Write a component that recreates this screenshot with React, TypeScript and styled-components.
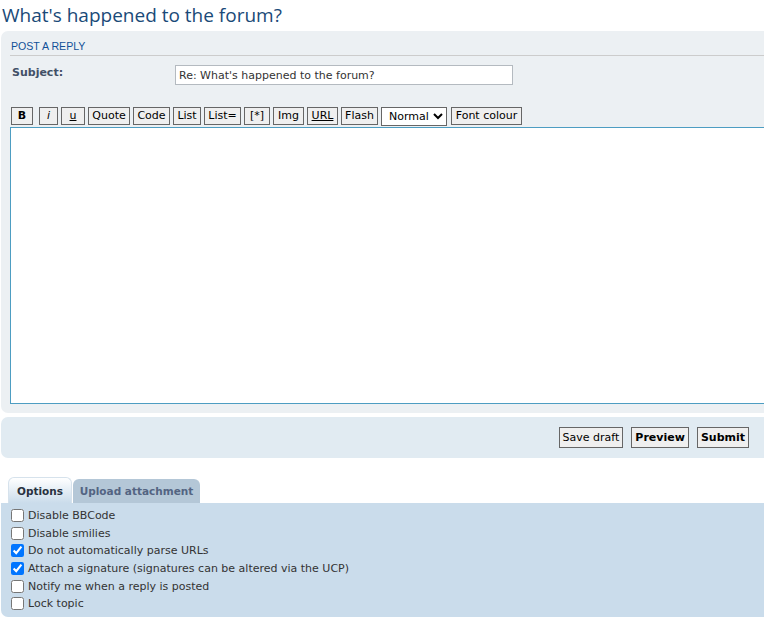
import React from "react";
import styled, { createGlobalStyle } from "styled-components";

const Global = createGlobalStyle`
  html, body { margin: 0; padding: 0; background: #fff; overflow: hidden; }
  body { font-family: "DejaVu Sans", Verdana, sans-serif; color: #333; }
`;

const Page = styled.div`
  width: 790px;
  padding-left: 1px;
`;

const Title = styled.h2`
  margin: 0;
  padding: 4px 0 4px 1px;
  font-family: "Open Sans", "DejaVu Sans", sans-serif;
  font-weight: 400;
  font-size: 19px;
  line-height: 23px;
  color: #1a4a78;
`;

const Panel = styled.div<{ $bg: string }>`
  background: ${(p) => p.$bg};
  border-radius: 7px;
`;

const ReplyPanel = styled(Panel)`
  padding: 8px 0 9px 9px;
`;

const Header = styled.h3`
  margin: 0;
  padding: 0 0 2px 1px;
  border-bottom: 1px solid #cccccc;
  font-family: "Liberation Sans", Arial, sans-serif;
  font-weight: 400;
  font-size: 10.6px;
  line-height: 14px;
  text-transform: uppercase;
  color: #115098;
`;

const SubjectRow = styled.div`
  display: flex;
  align-items: flex-start;
  margin-top: 9px;
`;

const Label = styled.label`
  width: 165px;
  padding: 1px 0 0 2px;
  box-sizing: border-box;
  font-weight: 700;
  font-size: 11px;
  line-height: 14px;
  color: #425067;
`;

const SubjectInput = styled.input`
  width: 338px;
  height: 20px;
  box-sizing: border-box;
  border: 1px solid #b4bac0;
  padding: 0 3px;
  font-family: "DejaVu Sans", Verdana, sans-serif;
  font-size: 11px;
  color: #333;
  background: #fff;
  outline: none;
`;

const Toolbar = styled.div`
  display: flex;
  align-items: flex-start;
  margin-top: 22px;
  padding-left: 1px;
  height: 18px;
`;

const ToolButton = styled.button<{ $w: number; $gap?: number; $b?: boolean; $i?: boolean; $u?: boolean }>`
  flex: none;
  width: ${(p) => p.$w}px;
  height: 18px;
  margin-right: ${(p) => (p.$gap ?? 3)}px;
  padding: 0;
  box-sizing: border-box;
  border: 1px solid #666;
  background: #efefef;
  font-family: "DejaVu Sans", Verdana, sans-serif;
  font-size: 11px;
  line-height: 16px;
  color: #000;
  font-weight: ${(p) => (p.$b ? 700 : 400)};
  font-style: ${(p) => (p.$i ? "italic" : "normal")};
  text-decoration: ${(p) => (p.$u ? "underline" : "none")};
`;

const SizeSelect = styled.select`
  flex: none;
  width: 66px;
  height: 19px;
  margin-right: 4px;
  padding: 0 0 0 3px;
  border: 1px solid #666;
  border-radius: 0;
  background: #fff;
  font-family: "DejaVu Sans", Verdana, sans-serif;
  font-size: 11px;
  color: #000;
`;

const Editor = styled.textarea`
  display: block;
  margin-top: 2px;
  width: 100%;
  height: 277px;
  box-sizing: border-box;
  border: 1px solid #4d9dc2;
  background: #fff;
  resize: none;
  outline: none;
`;

const ActionPanel = styled(Panel)`
  margin-top: 4px;
  height: 41px;
  display: flex;
  align-items: center;
  justify-content: flex-end;
  padding-right: 42px;
  gap: 8px;
`;

const ActionButton = styled.button<{ $b?: boolean }>`
  height: 21px;
  padding: 0 3px;
  box-sizing: border-box;
  border: 1px solid #666;
  background: #efefef;
  font-family: "DejaVu Sans", Verdana, sans-serif;
  font-size: 11px;
  font-weight: ${(p) => (p.$b ? 700 : 400)};
  color: #000;
`;

const Tabs = styled.div`
  display: flex;
  align-items: flex-end;
  margin-top: 19px;
  padding-left: 7px;
  height: 26px;
`;

const Tab = styled.div<{ $active?: boolean; $w: number }>`
  width: ${(p) => p.$w}px;
  height: ${(p) => (p.$active ? 26 : 24)}px;
  margin-right: 1px;
  box-sizing: border-box;
  border-radius: 6px 6px 0 0;
  display: flex;
  align-items: center;
  justify-content: center;
  font-weight: 700;
  font-size: 10.5px;
  color: ${(p) => (p.$active ? "#28313f" : "#536482")};
  background: ${(p) =>
    p.$active ? "linear-gradient(#ffffff, #cadceb)" : "#b4c7d7"};
  border: ${(p) => (p.$active ? "1px solid #d6e2ec" : "none")};
  border-bottom: none;
`;

const OptionsPanel = styled.div`
  background: #cadceb;
  border-radius: 0 7px 7px 7px;
  padding: 4px 0 5px 10px;
  height: 114px;
  box-sizing: border-box;
`;

const OptionRow = styled.label`
  display: flex;
  align-items: center;
  height: 17.6px;
  font-size: 11px;
  color: #333;
`;

const Check = styled.input`
  margin: 0 4px 0 0;
  width: 13px;
  height: 13px;
`;

const tools: { t: string; w: number; gap?: number; b?: boolean; i?: boolean; u?: boolean }[] = [
  { t: "B", w: 22, gap: 6, b: true },
  { t: "i", w: 19, i: true },
  { t: "u", w: 24, u: true },
  { t: "Quote", w: 42 },
  { t: "Code", w: 37 },
  { t: "List", w: 28 },
  { t: "List=", w: 37 },
  { t: "[*]", w: 26 },
  { t: "Img", w: 31 },
  { t: "URL", w: 31, u: true },
  { t: "Flash", w: 37 },
];

const options: { t: string; c: boolean }[] = [
  { t: "Disable BBCode", c: false },
  { t: "Disable smilies", c: false },
  { t: "Do not automatically parse URLs", c: true },
  { t: "Attach a signature (signatures can be altered via the UCP)", c: true },
  { t: "Notify me when a reply is posted", c: false },
  { t: "Lock topic", c: false },
];

export default function App() {
  return (
    <Page>
      <Global />
      <Title>What's happened to the forum?</Title>
      <ReplyPanel $bg="#ecf0f3">
        <Header>Post a reply</Header>
        <SubjectRow>
          <Label>Subject:</Label>
          <SubjectInput defaultValue="Re: What's happened to the forum?" />
        </SubjectRow>
        <Toolbar>
          {tools.map((b) => (
            <ToolButton key={b.t} $w={b.w} $gap={b.gap} $b={b.b} $i={b.i} $u={b.u}>
              {b.t}
            </ToolButton>
          ))}
          <SizeSelect defaultValue="Normal">
            <option>Tiny</option>
            <option>Small</option>
            <option>Normal</option>
            <option>Large</option>
            <option>Huge</option>
          </SizeSelect>
          <ToolButton $w={71}>Font colour</ToolButton>
        </Toolbar>
        <Editor />
      </ReplyPanel>
      <ActionPanel $bg="#e1ebf2">
        <ActionButton>Save draft</ActionButton>
        <ActionButton $b>Preview</ActionButton>
        <ActionButton $b>Submit</ActionButton>
      </ActionPanel>
      <Tabs>
        <Tab $active $w={64}>Options</Tab>
        <Tab $w={127}>Upload attachment</Tab>
      </Tabs>
      <OptionsPanel>
        {options.map((o) => (
          <OptionRow key={o.t}>
            <Check type="checkbox" defaultChecked={o.c} />
            {o.t}
          </OptionRow>
        ))}
      </OptionsPanel>
    </Page>
  );
}
